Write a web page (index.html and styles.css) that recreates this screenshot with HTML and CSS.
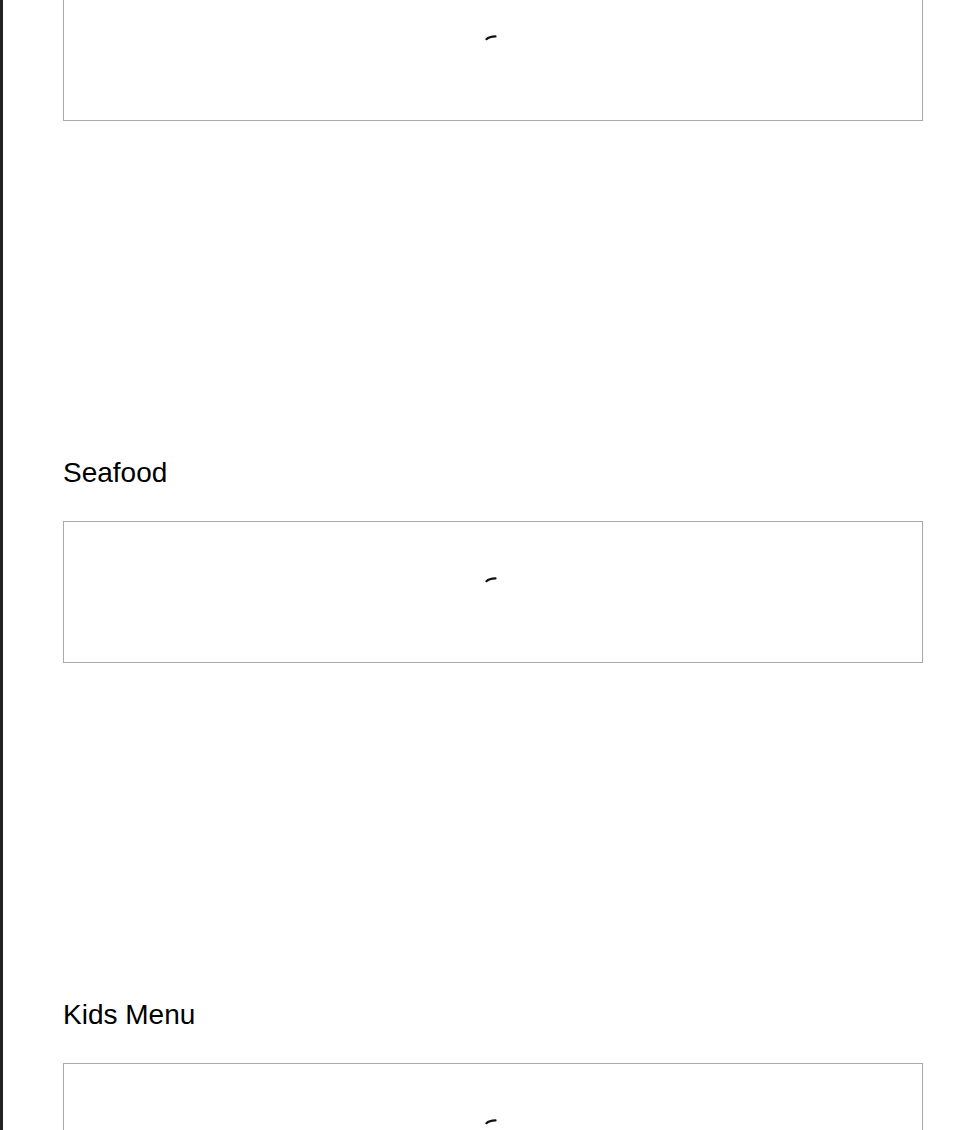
FILE: index.html
```html
<!DOCTYPE html>
<html lang="en">
<head>
<meta charset="utf-8">
<title>Menu</title>
<link rel="stylesheet" href="styles.css">
</head>
<body>
<div class="frame">
  <main class="page">
    <section class="menu-section">
      <div class="card">
        <svg class="spinner" width="16" height="8" viewBox="0 0 16 8"><path d="M1.5 5.2 Q4 2.6 10.5 2.4" fill="none" stroke="#111" stroke-width="2.2" stroke-linecap="round"/></svg>
      </div>
    </section>
    <section class="menu-section">
      <h2 class="section-title">Seafood</h2>
      <div class="card">
        <svg class="spinner" width="16" height="8" viewBox="0 0 16 8"><path d="M1.5 5.2 Q4 2.6 10.5 2.4" fill="none" stroke="#111" stroke-width="2.2" stroke-linecap="round"/></svg>
      </div>
    </section>
    <section class="menu-section">
      <h2 class="section-title">Kids Menu</h2>
      <div class="card">
        <svg class="spinner" width="16" height="8" viewBox="0 0 16 8"><path d="M1.5 5.2 Q4 2.6 10.5 2.4" fill="none" stroke="#111" stroke-width="2.2" stroke-linecap="round"/></svg>
      </div>
    </section>
  </main>
</div>
</body>
</html>
```
FILE: styles.css
```css
html, body {
  margin: 0;
  padding: 0;
  background: #fff;
  overflow: hidden;
}

body {
  font-family: "Liberation Sans", Arial, sans-serif;
  color: #000;
}

.frame {
  min-height: 100vh;
  border-left: 3px solid #232323;
}

.page {
  margin-top: -21px;
  padding: 0 43px 0 60px;
  display: flex;
  flex-direction: column;
  gap: 335px;
}

.menu-section {
  display: flex;
  flex-direction: column;
}

.section-title {
  margin: 1px 0 32px;
  font-size: 28px;
  line-height: 32px;
  font-weight: normal;
}

.card {
  box-sizing: border-box;
  height: 142px;
  border: 1px solid #aaa;
  display: flex;
  justify-content: center;
  align-items: flex-start;
  padding-top: 54px;
}

.spinner {
  display: block;
  margin-left: 0;
}
```
